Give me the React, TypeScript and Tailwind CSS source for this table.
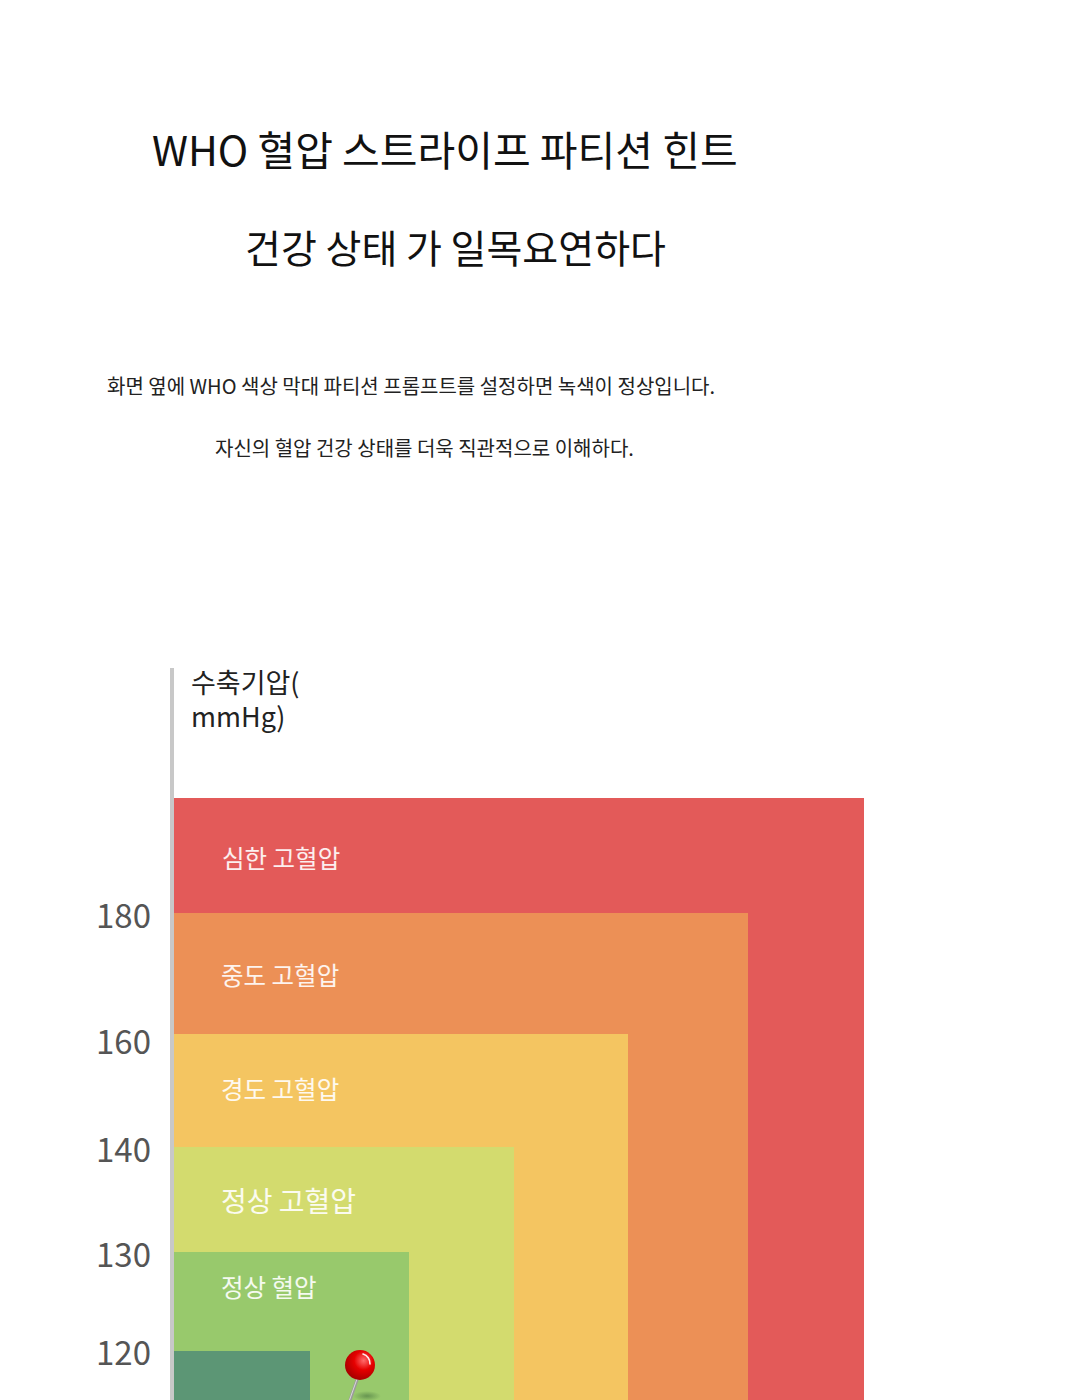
import React from 'react';

const font = "font-['Noto_Sans_CJK_KR','Noto_Sans',sans-serif]";

function Pin() {
  return (
    <svg className="absolute left-[161px] top-[97px]" width="52" height="60" viewBox="0 0 52 60">
      <defs>
        <radialGradient id="ball" cx="0.62" cy="0.35" r="0.7">
          <stop offset="0" stopColor="#ff6b6b" />
          <stop offset="0.45" stopColor="#e60000" />
          <stop offset="1" stopColor="#a30000" />
        </radialGradient>
        <radialGradient id="shadow" cx="0.5" cy="0.5" r="0.5">
          <stop offset="0" stopColor="#3f6b3a" stopOpacity="0.55" />
          <stop offset="1" stopColor="#3f6b3a" stopOpacity="0" />
        </radialGradient>
      </defs>
      <ellipse cx="32" cy="47" rx="14" ry="5" fill="url(#shadow)" />
      <line x1="23" y1="28" x2="12" y2="60" stroke="#9a9a9a" strokeWidth="3" strokeLinecap="round" />
      <line x1="22" y1="30" x2="12" y2="58" stroke="#d8d8d8" strokeWidth="1" />
      <circle cx="25" cy="16" r="15" fill="url(#ball)" />
      <path d="M28 5 A10 10 0 0 1 35 15" fill="none" stroke="#fff" strokeWidth="1.6" strokeLinecap="round" opacity="0.9" />
    </svg>
  );
}

export default function App() {
  return (
    <div className={`h-[1400px] bg-white overflow-hidden ${font}`}>
      {/* Title */}
      <div className="pt-[120px] text-[#111] leading-[56px]">
        <h1 className="pl-[152px] text-[41px] font-normal">WHO 혈압 스트라이프 파티션 힌트</h1>
        <h2 className="pl-[245px] mt-[42px] text-[39px] font-normal">건강 상태 가 일목요연하다</h2>
      </div>

      {/* Description */}
      <div className="mt-[98px] text-[20px] leading-[28px] text-[#222]">
        <p className="pl-[107px]">화면 옆에 WHO 색상 막대 파티션 프롬프트를 설정하면 녹색이 정상입니다.</p>
        <p className="pl-[215px] mt-[34px]">자신의 혈압 건강 상태를 더욱 직관적으로 이해하다.</p>
      </div>

      {/* Chart */}
      <div className="mt-[206px] flex">
        <div className="w-[170px] flex flex-col items-end pr-[19px] text-[33px] leading-[40px] text-[#555]">
          <span className="mt-[226px]">180</span>
          <span className="mt-[86px]">160</span>
          <span className="mt-[68px]">140</span>
          <span className="mt-[65px]">130</span>
          <span className="mt-[58px]">120</span>
        </div>
        <div className="w-[4px] bg-[#c8c8c8]" />
        <div className="flex flex-col">
          <div className="h-[130px] pl-[17px] pt-[0px] text-[27px] leading-[34px] text-[#222]">
            <p className="-mt-[3px]">수축기압(</p>
            <p>mmHg)</p>
          </div>

          <div className="w-[690px] bg-[#e35a59]">
            <div className="h-[115px] pl-[48px] pt-[44px] text-[24.5px] leading-[32px] text-white/90">심한 고혈압</div>
            <div className="w-[574px] bg-[#ec9056]">
              <div className="h-[121px] pl-[47px] pt-[46px] text-[24.5px] leading-[32px] text-white/90">중도 고혈압</div>
              <div className="w-[454px] bg-[#f4c561]">
                <div className="h-[113px] pl-[47px] pt-[39px] text-[24.5px] leading-[32px] text-white/90">경도 고혈압</div>
                <div className="w-[340px] bg-[#d3db6e]">
                  <div className="h-[105px] pl-[47px] pt-[35px] text-[28px] leading-[36px] text-white/90">정상 고혈압</div>
                  <div className="relative w-[235px] bg-[#98c96c]">
                    <div className="h-[99px] pl-[47px] pt-[19px] text-[24.5px] leading-[32px] text-white/90">정상 혈압</div>
                    <div className="w-[136px] h-[120px] bg-[#5c9675]" />
                    <Pin />
                  </div>
                </div>
              </div>
            </div>
          </div>
        </div>
      </div>
    </div>
  );
}
